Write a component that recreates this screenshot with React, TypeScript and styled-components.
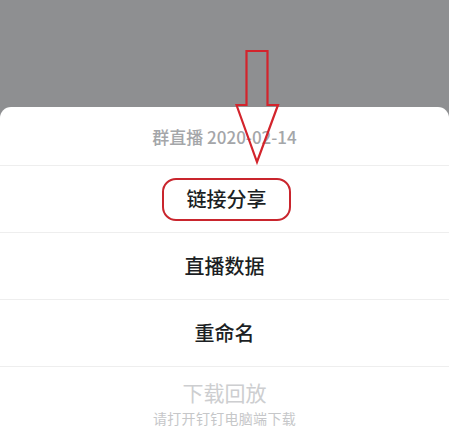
import React from 'react';
import styled, { createGlobalStyle } from 'styled-components';

const GlobalStyle = createGlobalStyle`
  html, body {
    margin: 0;
    padding: 0;
    background: #8e8f91;
    font-family: "Noto Sans CJK SC", "Noto Sans", sans-serif;
  }
`;

const Screen = styled.div`
  position: relative;
  width: 449px;
  height: 430px;
  overflow: hidden;
  display: flex;
  flex-direction: column;
  background: #8e8f91;
`;

const Backdrop = styled.div`
  height: 107px;
  flex-shrink: 0;
`;

const Sheet = styled.div`
  flex: 1;
  background: #ffffff;
  border-radius: 11px 11px 0 0;
  display: flex;
  flex-direction: column;
`;

const Title = styled.div`
  height: 58px;
  display: flex;
  align-items: center;
  justify-content: center;
  font-size: 17px;
  font-weight: 500;
  color: #a4a6a9;
  border-bottom: 1px solid #eeeeee;
`;

const Row = styled.div<{ last?: boolean }>`
  height: 67px;
  flex-shrink: 0;
  display: flex;
  flex-direction: column;
  align-items: center;
  justify-content: ${p => (p.last ? 'flex-start' : 'center')};
  padding-top: ${p => (p.last ? '13px' : '0')};
  box-sizing: border-box;
  border-bottom: ${p => (p.last ? 'none' : '1px solid #eeeeee')};
`;

const Label = styled.span<{ disabled?: boolean }>`
  font-size: ${p => (p.disabled ? '21px' : '20px')};
  line-height: ${p => (p.disabled ? '24px' : '28px')};
  font-weight: ${p => (p.disabled ? 400 : 500)};
  color: ${p => (p.disabled ? '#cdced0' : '#1c1f24')};
`;

const Hint = styled.span`
  font-size: 14px;
  line-height: 18px;
  margin-top: 5px;
  letter-spacing: 0.3px;
  color: #c6c7c9;
`;

const Highlight = styled.span`
  display: inline-flex;
  align-items: center;
  justify-content: center;
  width: 125px;
  height: 39px;
  margin-left: 4px;
  border: 2px solid #c9252d;
  border-radius: 14px;
`;

const Arrow = styled.svg`
  position: absolute;
  left: 235px;
  top: 49px;
  width: 45px;
  height: 116px;
`;

export default function App() {
  return (
    <Screen>
      <GlobalStyle />
      <Backdrop />
      <Sheet>
        <Title>群直播 2020-02-14</Title>
        <Row>
          <Highlight>
            <Label>链接分享</Label>
          </Highlight>
        </Row>
        <Row>
          <Label>直播数据</Label>
        </Row>
        <Row>
          <Label>重命名</Label>
        </Row>
        <Row last>
          <Label disabled>下载回放</Label>
          <Hint>请打开钉钉电脑端下载</Hint>
        </Row>
      </Sheet>
      {/* red annotation arrow pointing at the menu */}
      <Arrow viewBox="0 0 45 116">
        <polygon
          points="11.5,2 32.5,2 32.5,56 43,56 22,113 1.5,56 11.5,56"
          fill="none"
          stroke="#d3242c"
          strokeWidth="2.2"
          strokeLinejoin="miter"
        />
      </Arrow>
    </Screen>
  );
}
